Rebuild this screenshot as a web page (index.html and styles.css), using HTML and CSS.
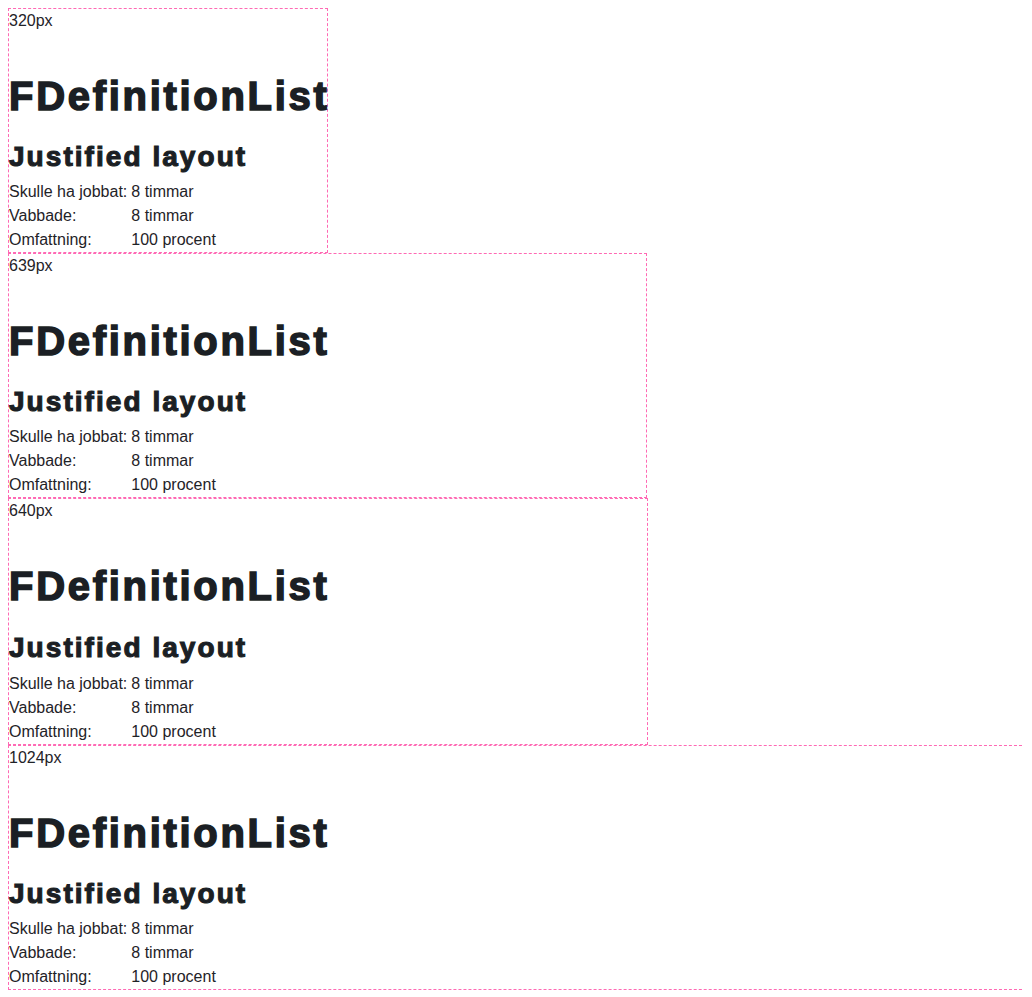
FILE: index.html
```html
<!DOCTYPE html>
<html lang="sv">
<head>
<meta charset="utf-8">
<title>FDefinitionList</title>
<link rel="stylesheet" href="styles.css">
</head>
<body>
  <section class="frame w320">
    <div class="frame-label">320px</div>
    <h1 class="title">FDefinitionList</h1>
    <h2 class="subtitle">Justified layout</h2>
    <dl class="deflist">
      <dt>Skulle ha jobbat:</dt><dd>8 timmar</dd>
      <dt>Vabbade:</dt><dd>8 timmar</dd>
      <dt>Omfattning:</dt><dd>100 procent</dd>
    </dl>
  </section>
  <section class="frame w639">
    <div class="frame-label">639px</div>
    <h1 class="title">FDefinitionList</h1>
    <h2 class="subtitle">Justified layout</h2>
    <dl class="deflist">
      <dt>Skulle ha jobbat:</dt><dd>8 timmar</dd>
      <dt>Vabbade:</dt><dd>8 timmar</dd>
      <dt>Omfattning:</dt><dd>100 procent</dd>
    </dl>
  </section>
  <section class="frame w640 wide">
    <div class="frame-label">640px</div>
    <h1 class="title">FDefinitionList</h1>
    <h2 class="subtitle">Justified layout</h2>
    <dl class="deflist">
      <dt>Skulle ha jobbat:</dt><dd>8 timmar</dd>
      <dt>Vabbade:</dt><dd>8 timmar</dd>
      <dt>Omfattning:</dt><dd>100 procent</dd>
    </dl>
  </section>
  <section class="frame w1024">
    <div class="frame-label">1024px</div>
    <h1 class="title">FDefinitionList</h1>
    <h2 class="subtitle">Justified layout</h2>
    <dl class="deflist">
      <dt>Skulle ha jobbat:</dt><dd>8 timmar</dd>
      <dt>Vabbade:</dt><dd>8 timmar</dd>
      <dt>Omfattning:</dt><dd>100 procent</dd>
    </dl>
  </section>
</body>
</html>
```
FILE: styles.css
```css
html {
  background: #ffffff;
}
body {
  margin: 8px 8px 0;
  font-family: "Liberation Sans", Arial, sans-serif;
  font-size: 16px;
  line-height: 24px;
  color: #1f2328;
}
.frame {
  box-sizing: border-box;
  border: 1px dashed #ff69b4;
  display: flex;
  flex-direction: column;
}
.w320 { width: 320px; }
.w639 { width: 639px; }
.w640 { width: 640px; }
.w1024 { width: 1024px; }

.frame-label {
  line-height: 24px;
}
.title {
  margin: 39px 0 20px;
  font-size: 40px;
  line-height: 48px;
  font-weight: 700;
  letter-spacing: 2.7px;
  -webkit-text-stroke: 1.5px #1b1f24;
  color: #1b1f24;
}
.subtitle {
  margin: 0 0 6px;
  font-size: 28px;
  line-height: 34px;
  font-weight: 700;
  letter-spacing: 2.05px;
  -webkit-text-stroke: 1.1px #1b1f24;
  color: #1b1f24;
}
.wide .subtitle {
  margin: 1px 0 7px;
}
.deflist {
  margin: 0;
  display: grid;
  grid-template-columns: max-content 1fr;
  column-gap: 4px;
}
.deflist dt,
.deflist dd {
  margin: 0;
  line-height: 24px;
}
```
